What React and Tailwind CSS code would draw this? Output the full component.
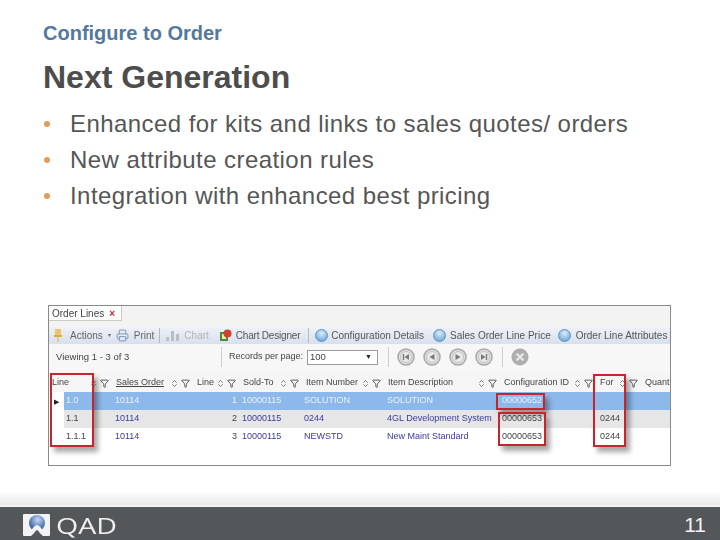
import { ChevronsUpDown, Filter, Printer } from "lucide-react";

const font = { fontFamily: '"Liberation Sans", Arial, sans-serif' };

const columns = [
    { label: "Line", width: "w-[67px]", pad: "pl-[3px]" },
    { label: "Sales Order", width: "w-[81px]", underline: true },
    { label: "Line", width: "w-[46px]" },
    { label: "Sold-To", width: "w-[63px]" },
    { label: "Item Number", width: "w-[82px]" },
    { label: "Item Description", width: "w-[116px]" },
    { label: "Configuration ID", width: "w-[96px]" },
    { label: "For", width: "w-[45px]" },
    { label: "Quant", width: "w-[26px]", bare: true },
];

const rows = [
    { line: "1.0", so: "10114", n: "1", to: "10000115", item: "SOLUTION", desc: "SOLUTION", cfg: "00000652", forr: "", bg: "bg-[#8db8ea]", selected: true },
    { line: "1.1", so: "10114", n: "2", to: "10000115", item: "0244", desc: "4GL Development System", cfg: "00000653", forr: "0244", bg: "bg-[#e6e6e6]" },
    { line: "1.1.1", so: "10114", n: "3", to: "10000115", item: "NEWSTD", desc: "New Maint Standard", cfg: "00000653", forr: "0244", bg: "bg-white" },
];

const NavIcon = ({ d, bar }) => (
    <svg width="18" height="18" viewBox="0 0 18 18">
        <circle cx="9" cy="9" r="8" fill="#dedede" stroke="#a8a8a8" strokeWidth="1.5" />
        <circle cx="9" cy="9" r="5.5" fill="#e9e9e9" stroke="#c4c4c4" />
        <path d={d} fill="#7a7a7a" />
        {bar && <rect x={bar} y="6" width="1.4" height="6" fill="#7a7a7a" />}
    </svg>
);

const BlueDot = () => (
    <span className="h-[13px] w-[13px] shrink-0 rounded-full border border-[#5d92c4] bg-[radial-gradient(circle_at_50%_30%,#dcecf9,#5b9ad0)]" />
);

const RedBox = ({ className }) => (
    <div className={`absolute border-[2px] border-[#c8242b] shadow-[4px_5px_5px_rgba(0,0,0,0.35)] ${className}`} />
);

const Toolbar = () => (
    <div className="flex h-[17px] items-center whitespace-nowrap bg-gradient-to-b from-[#eef2f8] to-[#d8e0ee] pl-[5px] text-[10px] text-[#666]">
        <svg width="8" height="13" viewBox="0 0 8 13" className="shrink-0">
            <path d="M1 0h6v6H1z" fill="#eec56a" />
            <path d="M0 6h8v2H0z" fill="#e0a93a" />
            <path d="M3.4 8h1.2v5H3.4z" fill="#d9b26a" />
        </svg>
        <span className="ml-[8px]">Actions</span>
        <span className="ml-[5px] text-[6px]">▾</span>
        <Printer size={13} strokeWidth={1.5} className="ml-[5px] shrink-0 text-[#6e8aa8]" />
        <span className="ml-[5px]">Print</span>
        <span className="ml-[5px] h-[15px] border-l border-[#b8b8b8]" />
        <svg width="13" height="11" viewBox="0 0 13 11" className="ml-[6px] shrink-0">
            <path d="M0 7h3v4H0zM5 1h3v10H5zM10 4h3v7h-3z" fill="#b9bfc4" />
        </svg>
        <span className="ml-[5px] text-[#b5b5b5]">Chart</span>
        <svg width="13" height="13" viewBox="0 0 13 13" className="ml-[10px] shrink-0">
            <path d="M1 3h8v9H1z" fill="#4e8a3a" />
            <path d="M3 5h4v5H3z" fill="#f3e9b5" />
            <circle cx="8.5" cy="4.5" r="4" fill="#d2402e" />
        </svg>
        <span className="ml-[4px] tracking-[-0.2px] text-[#555]">Chart Designer</span>
        <span className="ml-[8px] h-[15px] border-l border-[#b8b8b8]" />
        <span className="ml-[6px] flex items-center gap-[3px]">
            <BlueDot />
            <span className="text-[#555]">Configuration Details</span>
        </span>
        <span className="ml-[9px] flex items-center gap-[4px]">
            <BlueDot />
            <span className="text-[#555]">Sales Order Line Price</span>
        </span>
        <span className="ml-[7px] flex items-center gap-[5px]">
            <BlueDot />
            <span className="text-[#555]">Order Line Attributes</span>
        </span>
    </div>
);

const Pager = () => (
    <div className="flex h-[28px] items-center whitespace-nowrap bg-[#f7f7f7] pb-[2px] pl-[7px] text-[9.5px]">
        <span className="w-[166px] shrink-0 border-r border-[#cfcfcf] leading-[20px]">Viewing 1 - 3 of 3</span>
        <span className="ml-[7px] w-[78px] shrink-0 text-[9px]">Records per page:</span>
        <span className="flex h-[15px] w-[71px] shrink-0 items-center justify-between border border-[#9a9a9a] bg-white pr-[5px] pl-[2px]">
            100
            <span className="text-[7px] text-[#222]">▼</span>
        </span>
        <span className="ml-[10px] h-[20px] border-l border-[#cfcfcf]" />
        <div className="ml-[8px] flex gap-[8px]">
            <NavIcon d="M12 6v6L7.5 9z" bar="5.8" />
            <NavIcon d="M11.5 6v6L6.5 9z" />
            <NavIcon d="M6.5 6v6l5-3z" />
            <NavIcon d="M6 6v6l4.5-3z" bar="10.8" />
        </div>
        <span className="ml-[9px] h-[20px] border-l border-[#cfcfcf]" />
        <svg width="18" height="18" viewBox="0 0 18 18" className="ml-[8px]">
            <circle cx="9" cy="9" r="8.5" fill="#aeaeae" />
            <path d="M5.5 5.5l7 7M12.5 5.5l-7 7" stroke="#e6e6e6" strokeWidth="2.4" />
        </svg>
    </div>
);

const OrderGrid = () => (
    <div className="relative mt-[91px] ml-[48px] h-[161px] w-[623px] overflow-hidden border border-[#8a8a8a] bg-white text-[9px] text-[#444] blur-[0.4px]">
        <div className="h-[21px] bg-[#f3f3f3]">
            <div className="flex h-[15px] w-fit items-center gap-[5px] border-r border-b border-[#c9c9c9] bg-white pr-[6px] pl-[3px] text-[10px]">
                <span>Order Lines</span>
                <span className="font-bold text-[#c8242b]">×</span>
            </div>
        </div>
        <Toolbar />
        <Pager />
        <div className="flex h-[20px] items-center whitespace-nowrap bg-[#f5f5f5] pt-[2px]">
            {columns.map((c, i) => (
                <div key={i} className={`flex shrink-0 items-center ${c.width} ${c.pad || ""}`}>
                    <span className={c.underline ? "underline" : ""}>{c.label}</span>
                    {!c.bare && (
                        <span className="ml-auto flex items-center gap-[2px] pr-[7px] text-[#555]">
                            <ChevronsUpDown size={9} />
                            <Filter size={9} strokeWidth={2.5} />
                        </span>
                    )}
                </div>
            ))}
        </div>
        {rows.map((r) => {
            const link = r.selected ? "text-[#e8f1fb]" : "text-[#3a3aa0]";
            const plain = r.selected ? "text-[#e8f1fb]" : "text-[#444]";
            return (
                <div key={r.n} className="flex h-[18px] items-center whitespace-nowrap pl-[15px]">
                    <div className={`flex h-full flex-1 items-center ${r.bg}`}>
                        <span className={`w-[51px] shrink-0 pl-[2px] ${plain}`}>{r.line}</span>
                        <span className={`w-[82px] shrink-0 ${link}`}>{r.so}</span>
                        <span className={`w-[40px] shrink-0 text-right ${plain}`}>{r.n}</span>
                        <span className={`ml-[5px] w-[62px] shrink-0 ${link}`}>{r.to}</span>
                        <span className={`w-[83px] shrink-0 ${link}`}>{r.item}</span>
                        <span className={`w-[115px] shrink-0 ${link}`}>{r.desc}</span>
                        <span className={`w-[98px] shrink-0 ${plain}`}>{r.cfg}</span>
                        <span className={plain}>{r.forr}</span>
                    </div>
                </div>
            );
        })}
        <span className="absolute top-[91px] left-[5px] text-[7px] text-[#222]">▶</span>
        <RedBox className="top-[67px] left-[1px] h-[74px] w-[44px]" />
        <RedBox className="top-[87px] left-[447px] h-[17px] w-[49px]" />
        <RedBox className="top-[106px] left-[449px] h-[34px] w-[48px]" />
        <RedBox className="top-[68px] left-[544px] h-[73px] w-[33px]" />
    </div>
);

const QadLogo = () => (
    <svg width="27" height="22" viewBox="0 0 27 22" className="shrink-0">
        <defs>
            <radialGradient id="sphere" cx="55%" cy="30%" r="70%">
                <stop offset="0%" stopColor="#c9d9ee" />
                <stop offset="55%" stopColor="#6b90c6" />
                <stop offset="100%" stopColor="#2f4f86" />
            </radialGradient>
        </defs>
        <rect width="27" height="22" rx="1" fill="#f1f3f5" />
        <circle cx="14" cy="9" r="8" fill="url(#sphere)" />
        <path d="M3 22 C8 18 10 12 14 11 C18 12 20 18 25 22 Z" fill="#f1f3f5" />
        <path d="M8 22 C11 20 12 17 14 16 C16 17 17 20 20 22 Z" fill="#54575a" />
    </svg>
);

export default function App() {
    return (
        <div className="flex h-[540px] w-[720px] flex-col overflow-hidden bg-white" style={font}>
            <div className="flex-1">
                <div className="pt-[21px] pl-[43px] text-[20px] leading-[24px] font-bold text-[#54799f]">
                    Configure to Order
                </div>
                <div className="mt-[13px] pl-[43px] text-[32px] leading-[38px] font-bold text-[#4d4d4d]">
                    Next Generation
                </div>
                <ul className="mt-[10px] pl-[43px] text-[24px] leading-[36px] tracking-[0.43px] text-[#565656]">
                    {[
                        "Enhanced for kits and links to sales quotes/ orders",
                        "New attribute creation rules",
                        "Integration with enhanced best pricing",
                    ].map((t) => (
                        <li key={t} className="flex items-center">
                            <span className="ml-[1px] h-[6px] w-[6px] rounded-full bg-[#e39a5c]" />
                            <span className="ml-[20px]">{t}</span>
                        </li>
                    ))}
                </ul>
                <OrderGrid />
            </div>
            <div className="h-[14px] bg-gradient-to-b from-white to-[#e9e9e9]" />
            <div className="h-[2px] bg-[#f2f2f2]" />
            <div className="flex h-[33px] items-center justify-between bg-[#54575a] pr-[14px] pl-[23px] text-white">
                <div className="mt-[2px] flex items-center gap-[6px]">
                    <QadLogo />
                    <span
                        className="origin-left scale-x-[1.3] text-[22px] leading-none text-[#f0f0f0]"
                        style={{ fontFamily: '"Open Sans", sans-serif' }}
                    >
                        QAD
                    </span>
                </div>
                <span className="mt-[1px] text-[21px] leading-none font-light text-[#f4f4f4]">11</span>
            </div>
        </div>
    );
}
